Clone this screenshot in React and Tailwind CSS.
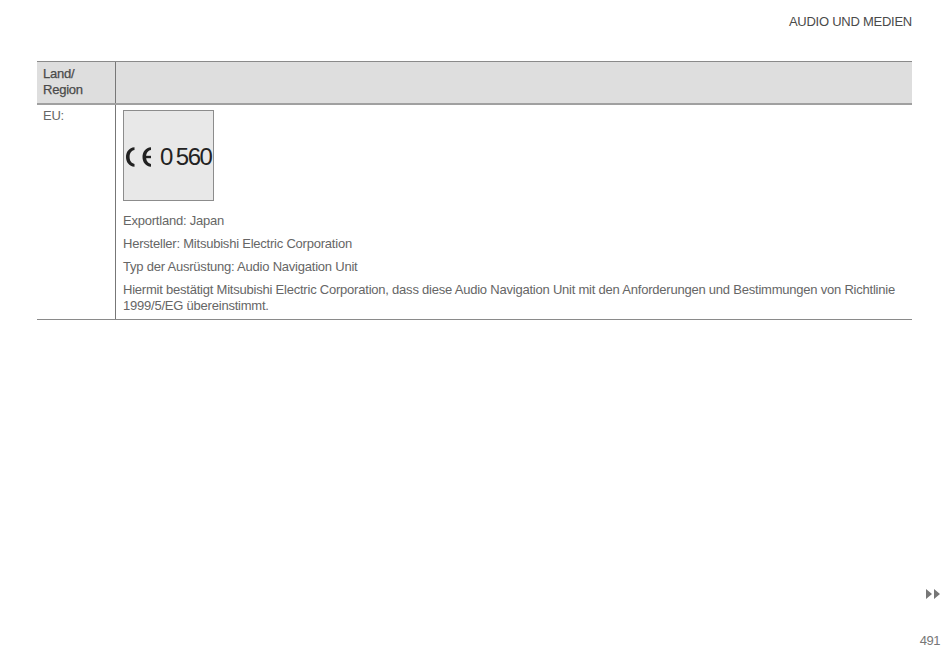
const arc = "M8.5 0.2 C3 0.6 0 5 0 10 C0 15 3 19.4 8.5 19.8 L8.5 16.9 C5.4 16.4 3.6 13.6 3.6 10 C3.6 6.4 5.4 3.6 8.5 3.1 Z";

export default function App() {
  return (
    <div className="w-[950px] h-[657px] bg-white flex flex-col font-['Liberation_Sans',Arial,sans-serif] text-[13px] leading-[16px] tracking-[-0.22px] text-[#666] overflow-hidden">
      <div className="h-[61px] pl-[37px] pr-[38px] pt-[14px] text-right text-[#4a4a4a] tracking-[-0.25px]">AUDIO UND MEDIEN</div>
      <div className="ml-[37px] mr-[38px] border-t border-b border-[#8a8a8a]">
        <div className="flex h-[43px] bg-[#dedede] border-b-2 border-[#a0a0a0] text-[#4a4a4a] [-webkit-text-stroke:0.25px_#4a4a4a]">
          <div className="w-[79px] shrink-0 border-r border-[#777] pl-[6px] pt-[4px]">
            Land/<br />Region
          </div>
          <div className="flex-1" />
        </div>
        <div className="flex">
          <div className="w-[79px] shrink-0 border-r border-[#777] pl-[6px] pt-[3px]">EU:</div>
          <div className="flex-1 pl-[7px] pr-[12px] pt-[5px] pb-[5px]">
            <div className="w-[91px] h-[91px] bg-[#e8e8e8] border border-[#8c8c8c] flex items-center pl-[2px] pt-[2px] text-[#222] mb-[12px]">
              <svg width="26" height="20" viewBox="0 0 26 20" className="shrink-0">
                <path d={arc} fill="#222" />
                <g transform="translate(16.5 0)">
                  <path d={arc} fill="#222" />
                  <path d="M3 8.8 H8.5 V11.2 H3 Z" fill="#222" />
                </g>
              </svg>
              <span className="ml-[8px] text-[24px] leading-[24px] tracking-[-1.4px] [word-spacing:-1.5px] whitespace-nowrap">0 560</span>
            </div>
            <div className="flex flex-col gap-[7px]">
              <p>Exportland: Japan</p>
              <p>Hersteller: Mitsubishi Electric Corporation</p>
              <p>Typ der Ausrüstung: Audio Navigation Unit</p>
              <p>Hiermit bestätigt Mitsubishi Electric Corporation, dass diese Audio Navigation Unit mit den Anforderungen und Bestimmungen von Richtlinie 1999/5/EG übereinstimmt.</p>
            </div>
          </div>
        </div>
      </div>
      <div className="flex-1 flex flex-col items-end justify-end pr-[10px] pb-[8px] text-[#777]">
        <svg width="14" height="10" viewBox="0 0 14 10" className="mb-[34px]">
          <path d="M0 0 L6 5 L0 10 Z M8 0 L14 5 L8 10 Z" fill="#777" />
        </svg>
        <div className="tracking-[-0.5px]">491</div>
      </div>
    </div>
  );
}
